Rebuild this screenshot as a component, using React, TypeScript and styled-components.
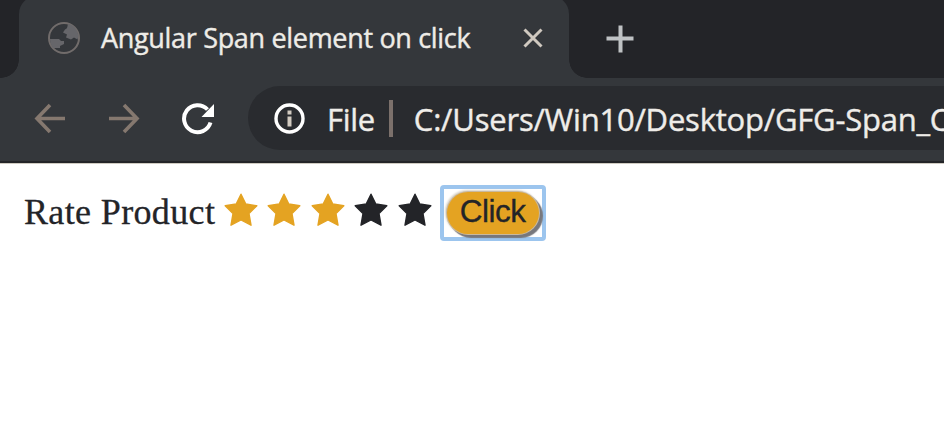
import React from 'react';
import styled, { createGlobalStyle } from 'styled-components';

const INK = '#232428';
const SURFACE = '#34373b';
const GOLD = '#e4a322';

const GlobalStyle = createGlobalStyle`
  html, body { margin: 0; background: #fff; overflow: hidden; }
  *, *::before, *::after { box-sizing: border-box; }
`;

const Window = styled.div`
  width: 944px;
  height: 444px;
  overflow: hidden;
  background: #fff;
`;

const TabStrip = styled.div`
  display: grid;
  grid-template-columns: 19px 550px 1fr;
  height: 78px;
  background: ${INK};
`;

const StripEdge = styled.div<{ $side: 'left' | 'right' }>`
  display: flex;
  align-items: center;
  height: 78px;
  background: radial-gradient(
    circle at ${p => (p.$side === 'left' ? '0 0' : '100% 0')},
    ${INK} 17.5px,
    ${SURFACE} 18px
  ) ${p => (p.$side === 'left' ? '100% 100%' : '0 100%')} / 18px 18px no-repeat ${INK};
  padding-left: ${p => (p.$side === 'left' ? 0 : 37)}px;
`;

const Tab = styled.div`
  display: flex;
  align-items: center;
  height: 82px;
  margin-top: -4px;
  padding: 2px 25px 0 29px;
  border-radius: 18px 18px 0 0;
  background: ${SURFACE};
`;

const TabTitle = styled.span`
  flex: 1;
  margin-left: 21px;
  color: #eeece7;
  font: 27px/36px 'Open Sans', sans-serif;
  letter-spacing: -0.32px;
  white-space: nowrap;
  -webkit-text-stroke: 0.4px currentColor;
`;

const Toolbar = styled.div`
  display: flex;
  height: 85px;
  padding: 8px 0 0 34px;
  background: ${SURFACE};
  border-bottom: 2px solid ${INK};
  box-shadow: 0 1px 0 #cfcbc2;
`;

const NavButtons = styled.div`
  display: flex;
  align-items: center;
  gap: 42px;
  width: 214px;
  height: 64px;
  flex: none;
`;

const AddressBar = styled.div`
  display: flex;
  align-items: center;
  flex: 1;
  min-width: 0;
  height: 64px;
  padding-left: 26px;
  border-radius: 32px 0 0 32px;
  background: #292b2f;
  overflow: hidden;
`;

const UrlText = styled.span<{ $left: number; $tracking: number }>`
  flex: none;
  margin-left: ${p => p.$left}px;
  padding-top: 1px;
  color: #efede9;
  font: 31px/42px 'Open Sans', sans-serif;
  letter-spacing: ${p => p.$tracking}px;
  white-space: nowrap;
  -webkit-text-stroke: 0.4px currentColor;
`;

const Divider = styled.div`
  flex: none;
  width: 4px;
  height: 37px;
  margin-left: 14px;
  background: #7b706b;
`;

const Icon = styled.svg`
  display: block;
  flex: none;
`;

const Page = styled.main`
  display: flex;
  align-items: flex-start;
  padding: 22px 0 0 24px;
`;

const Label = styled.span`
  width: 200px;
  color: ${INK};
  font: 36px/42px 'Liberation Serif', serif;
  letter-spacing: 0.36px;
  padding-top: 6px;
  white-space: nowrap;
  -webkit-text-stroke: 0.3px currentColor;
`;

const Stars = styled.div`
  display: flex;
  gap: 9.4px;
  padding-top: 8px;
`;

const ClickButton = styled.button`
  width: 106px;
  height: 56px;
  margin: 0 0 0 8px;
  padding: 3px 4px 5px 3px;
  border: 4px solid #9cc5ee;
  border-radius: 4px;
  background: #fff;
`;

const ButtonFace = styled.span`
  display: block;
  width: 92px;
  height: 42px;
  border-radius: 21px;
  background: ${GOLD};
  box-shadow: 0 0 0 1px #c9b99e, 3px 3px 1px 1px #77777c, -1px -1px 2px 1px #d9d4ca;
  color: ${INK};
  font: 31.5px/38px 'Liberation Sans', sans-serif;
  letter-spacing: -0.5px;
  text-align: center;
  -webkit-text-stroke: 0.3px currentColor;
`;

const Globe = () => (
  <Icon width="32" height="32" viewBox="0 0 32 32">
    <circle cx="16" cy="16" r="15" fill="none" stroke="#716c6b" strokeWidth="2" />
    <path
      d="M20 2c-1 3 0 4-3 5.500l-2 3 4 2-1 3 5 2 3-2 3.500 2 1-4C29 7 25 2 20 2ZM2 17h9l2 2h3v3l-4 2v2H5C3 23 2 20 2 17Z"
      fill="#66666a"
    />
  </Icon>
);

const Arrow = ({ forward = false }: { forward?: boolean }) => (
  <Icon width="32" height="32" viewBox="0 0 32 32">
    <path
      d={forward ? 'M1 16.500h28M16 3 29 16.500 16 30' : 'M31 16.500H3M16 3 3 16.500l13 13.500'}
      fill="none"
      stroke="#85786f"
      strokeWidth="3.600"
    />
  </Icon>
);

const Reload = () => (
  <Icon width="34" height="34" viewBox="0 0 34 34">
    <path d="M28.500 21.500A13.500 13.500 0 1 1 25.500 8.500" fill="none" stroke="#fff" strokeWidth="4" />
    <path d="M32 3v13H19.500Z" fill="#fff" />
  </Icon>
);

const Info = () => (
  <Icon width="31" height="31" viewBox="0 0 31 31">
    <circle cx="15.500" cy="15.500" r="13.500" fill="none" stroke="#fff" strokeWidth="3.400" />
    <path d="M15.500 7.500v4M15.500 13.500v10" stroke="#d2cbc1" strokeWidth="4" />
  </Icon>
);

const Close = () => (
  <Icon width="22" height="22" viewBox="0 0 22 22">
    <path d="M2.500 2.500l17 17M19.500 2.500l-17 17" stroke="#d0c9c0" strokeWidth="3" />
  </Icon>
);

const Plus = () => (
  <Icon width="28" height="28" viewBox="0 0 28 28">
    <path d="M14.500 .5v27M.5 13.500h27" stroke="#bfc2c4" strokeWidth="4" />
  </Icon>
);

const Star = ({ rated }: { rated: boolean }) => (
  <Icon width="34" height="34" viewBox="0 0 34 34">
    <path
      d="M17 1.200 21.800 11 32.800 12.800 25 20.600 27 32.200 17 27 7 32.200 9 20.600 1.200 12.800 12.200 11Z"
      fill={rated ? GOLD : INK}
      stroke={rated ? GOLD : INK}
      strokeWidth="1.400"
      strokeLinejoin="round"
    />
  </Icon>
);

export default function App() {
  return (
    <Window>
      <GlobalStyle />
      <TabStrip>
        <StripEdge $side="left" />
        <Tab>
          <Globe />
          <TabTitle>Angular Span element on click</TabTitle>
          <Close />
        </Tab>
        <StripEdge $side="right">
          <Plus />
        </StripEdge>
      </TabStrip>
      <Toolbar>
        <NavButtons>
          <Arrow />
          <Arrow forward />
          <Reload />
        </NavButtons>
        <AddressBar>
          <Info />
          <UrlText $left={22} $tracking={-0.3}>File</UrlText>
          <Divider />
          <UrlText $left={21} $tracking={-0.21}>C:/Users/Win10/Desktop/GFG-Span_C</UrlText>
        </AddressBar>
      </Toolbar>
      <Page>
        <Label>Rate Product</Label>
        <Stars>
          {[1, 2, 3, 4, 5].map(n => (
            <Star key={n} rated={n <= 3} />
          ))}
        </Stars>
        <ClickButton type="button">
          <ButtonFace>Click</ButtonFace>
        </ClickButton>
      </Page>
    </Window>
  );
}
